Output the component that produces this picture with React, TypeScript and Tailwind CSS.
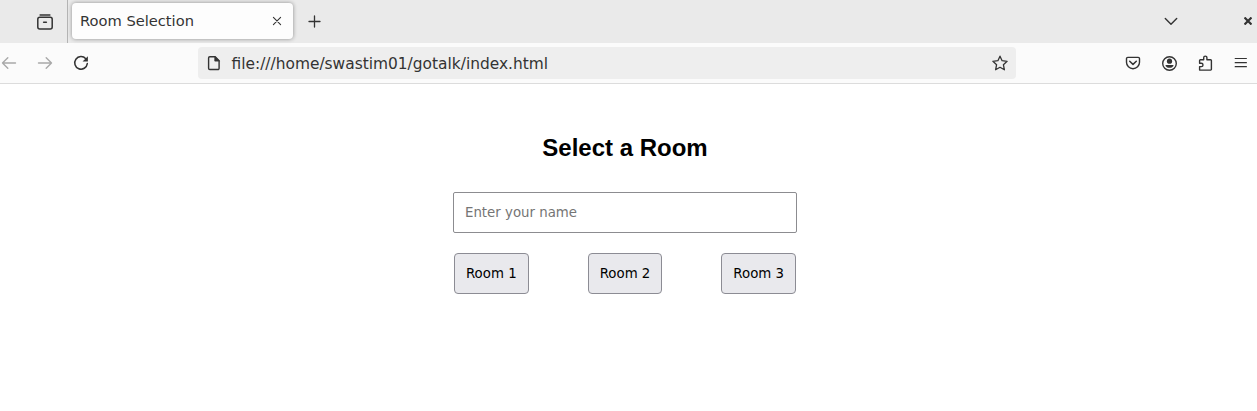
import type { ReactNode } from "react";

function Icon({ children, className = "" }: { children: ReactNode; className?: string }) {
  return (
    <svg
      width="16"
      height="16"
      viewBox="0 0 16 16"
      fill="none"
      stroke="currentColor"
      strokeWidth="1.4"
      strokeLinecap="round"
      strokeLinejoin="round"
      className={`block shrink-0 ${className}`}
    >
      {children}
    </svg>
  );
}

function TabStrip() {
  return (
    <div className="flex h-[43px] items-center bg-[#eaeaea] text-[#333]">
      <div className="flex h-full w-[68px] shrink-0 items-center border-r border-[#b4b4b4] pl-[37px]">
        <Icon>
          <path d="M3.1.9h9.8" strokeWidth="1.5" />
          <rect x=".8" y="3.2" width="14.4" height="11.8" rx="2" strokeWidth="1.5" />
          <path d="M6.6 8.2h2.8" strokeWidth="1.5" />
        </Icon>
      </div>
      <div className="ml-1 mb-px flex h-9 w-[221px] items-center rounded-[4px] bg-[#fdfdfd] pl-2 pr-2 shadow-[0_0_4px_rgba(0,0,0,0.4)]">
        <span className="flex-1 whitespace-nowrap text-[14.667px] leading-5">Room Selection</span>
        <Icon>
          <path d="M4.4 4.4l7.2 7.2M11.6 4.4l-7.2 7.2" strokeWidth="1.1" />
        </Icon>
      </div>
      <Icon className="ml-[14px]">
        <path d="M7.5 2v11M2 7.5h11" strokeWidth="1.3" />
      </Icon>
      <div className="ml-auto flex items-center pr-[5px]">
        <Icon className="mr-[65px]">
          <path d="M2.3 4.6L8 10.2l5.7-5.6" />
        </Icon>
        <svg width="8" height="8" viewBox="0 0 8 8" className="mb-px block" stroke="currentColor" strokeWidth="2.2">
          <path d="M.5.5l7 7M7.5.5l-7 7" />
        </svg>
      </div>
    </div>
  );
}

function Toolbar() {
  return (
    <div className="flex h-[41px] items-center border-b border-[#dcdcdc] bg-[#fbfbfb] text-[#333]">
      <Icon className="ml-px text-[#a9a9a9]">
        <path d="M14.5 8H1.5M6.8 2.7L1.5 8l5.3 5.3" />
      </Icon>
      <Icon className="ml-5 text-[#a9a9a9]">
        <path d="M1.5 8h13M9.2 2.7L14.5 8l-5.3 5.3" />
      </Icon>
      <Icon className="ml-5">
        <path d="M12.8 3.7A6.3 6.3 0 1 0 14.3 8.6" strokeWidth="1.5" />
        <path d="M14.9 1.3v5.1H9.6z" fill="currentColor" stroke="none" />
      </Icon>
      <div className="ml-[109px] flex h-8 w-[818px] items-center rounded-[4px] bg-[#eeeeee] px-2">
        <Icon>
          <path d="M3.8 1.8h5.4l3.9 3.9v7.6a1.2 1.2 0 0 1-1.2 1.2H3.8a1.2 1.2 0 0 1-1.2-1.2V3a1.2 1.2 0 0 1 1.2-1.2z" />
          <path d="M8.8 1.8v4.3h4.3z" fill="currentColor" strokeWidth=".8" />
        </Icon>
        <span className="ml-[9.5px] flex-1 whitespace-nowrap pt-[2px] text-[15.42px] leading-5">
          file:///home/swastim01/gotalk/index.html
        </span>
        <Icon>
          <path d="M8 1.2l2.1 4.5 5 .6-3.7 3.4 1 5.1L8 12.3l-4.4 2.5 1-5.1L.9 6.3l5-.6z" strokeWidth="1.3" />
        </Icon>
      </div>
      <Icon className="ml-[109px]">
        <path d="M2.8 2.4h10.4a1.3 1.3 0 0 1 1.3 1.3v3.5a6.5 6.5 0 0 1-13 0V3.7a1.3 1.3 0 0 1 1.3-1.3z" />
        <path d="M4.7 6.3L8 9.4l3.3-3.1" strokeWidth="1.5" />
      </Icon>
      <Icon className="ml-5">
        <circle cx="8.5" cy="8.5" r="6.8" />
        <circle cx="8.5" cy="6.2" r="2.6" fill="currentColor" stroke="none" />
        <path d="M4.6 9.9h7.8v1c-.9 1.3-2.2 1.9-3.9 1.9s-3-.6-3.9-1.9z" fill="currentColor" stroke="none" />
      </Icon>
      <Icon className="ml-5">
        <path d="M2.6 15.1v-3.5h1.7a1.7 1.7 0 0 0 0-3.4H2.6V5.6a.8.8 0 0 1 .8-.8h3.3V2.7a1.6 1.6 0 0 1 3.2 0v2.1h3.7a.8.8 0 0 1 .8.8v8.7a.8.8 0 0 1-.8.8z" />
      </Icon>
      <Icon className="ml-5">
        <path d="M2.2 3.5h11.2M2.2 7.7h11.2M2.2 11.7h11.2" strokeWidth="1.2" />
      </Icon>
    </div>
  );
}

const rooms = ["Room 1", "Room 2", "Room 3"];

export default function App() {
  return (
    <div className="h-[411px] overflow-hidden bg-white font-['DejaVu_Sans',sans-serif]">
      <TabStrip />
      <Toolbar />
      <main className="ml-[453px] flex w-[344px] flex-col pt-[50px]">
        <h2 className="text-center font-['Liberation_Sans',sans-serif] text-2xl leading-7 font-bold text-black">
          Select a Room
        </h2>
        <input
          type="text"
          placeholder="Enter your name"
          className="mt-[30px] h-[41px] w-full rounded-[2px] border border-[#8c8c90] bg-white px-[11px] text-[13.333px] text-black placeholder:text-[#757575]"
        />
        <div className="mt-5 flex justify-between px-px">
          {rooms.map((room) => (
            <button
              key={room}
              type="button"
              className="h-[41px] w-[74.6px] rounded-[4px] border border-[#8c8c94] bg-[#e9e9ed] text-[13.333px] whitespace-nowrap text-black"
            >
              {room}
            </button>
          ))}
        </div>
      </main>
    </div>
  );
}
